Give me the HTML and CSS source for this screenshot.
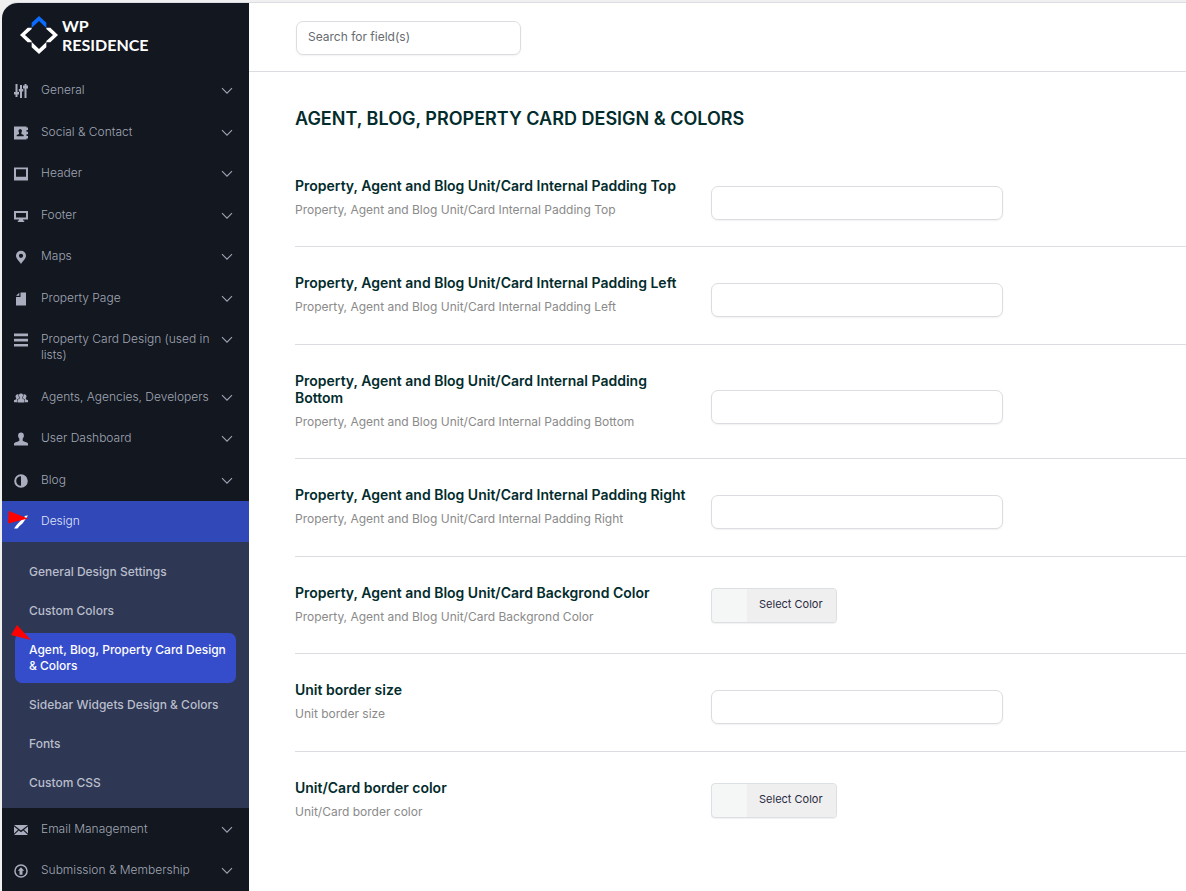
FILE: index.html
```
<!DOCTYPE html>
<html lang="en">
<head>
    <meta charset="UTF-8" />
    <meta name="viewport" content="width=device-width, initial-scale=1" />
    <title>WP Residence - Theme Options</title>
    <link rel="stylesheet" href="styles.css">
</head>
<body>
    <!-- shared chevron -->
    <svg class="sprite" aria-hidden="true">
        <symbol id="chevron" viewBox="0 0 12 8"><path d="M1 1.2l5 5 5-5" fill="none" stroke="currentColor" stroke-width="1.1" /></symbol>
    </svg>

    <div class="panel">
        <aside class="sidebar">
            <a href="#" class="logo">
                <svg class="logo-mark" viewBox="0 0 114 114" aria-hidden="true">
                    <path fill="#0a6cff" d="M57 0l22 20v16L57 15 35 36V20z" />
                    <path fill="#fff" d="M57 114l22-20V78L57 99 35 78v16zM0 57l23-22h12v4L15 57l20 18v4H23zM114 57L91 35H79v4l20 18-20 18v4h12z" />
                </svg>
                <span>WP<br />RESIDENCE</span>
            </a>

            <ul class="menu">
                <li>
                    <a href="#" class="menu-link">
                        <svg class="icon" viewBox="0 0 14 14"><path d="M1.500 0h2v8H5v2.500H3.500V13h-2v-2.500H0V8h1.500zM6 1h2v4h1.300v2.500H8V14H6V7.500H4.800V5H6zM10.500 0h2v1.500H14v3h-1.500V14h-2V4.500H9v-3h1.500z" /></svg>
                        <span>General</span>
                        <svg class="chevron"><use href="#chevron" /></svg>
                    </a>
                </li>
                <li>
                    <a href="#" class="menu-link">
                        <svg class="icon" viewBox="0 0 14 14"><path fill-rule="evenodd" d="M0 .5h12.500V13.500H0zM6.200 3a2 2 0 0 0-1.200 3.400v1.500L2.700 9v1.300h7V9L7.400 7.900V6.400A2 2 0 0 0 6.200 3z" /><path d="M12 1.500h2v2.500h-2zM12 5.800h2v2.500h-2zM12 10h2v2.500h-2z" /></svg>
                        <span>Social &amp; Contact</span>
                        <svg class="chevron"><use href="#chevron" /></svg>
                    </a>
                </li>
                <li>
                    <a href="#" class="menu-link">
                        <svg class="icon" viewBox="0 0 14 14"><path fill-rule="evenodd" d="M0 .5h14v13H0zM2 2.300v7.500h10V2.300z" /></svg>
                        <span>Header</span>
                        <svg class="chevron"><use href="#chevron" /></svg>
                    </a>
                </li>
                <li>
                    <a href="#" class="menu-link">
                        <svg class="icon" viewBox="0 0 14 14"><path fill-rule="evenodd" d="M0 2h14v8.500H9v1h1.200V13H3.800v-1.500H5v-1H0zM2 4v4.600h10V4z" /></svg>
                        <span>Footer</span>
                        <svg class="chevron"><use href="#chevron" /></svg>
                    </a>
                </li>
                <li>
                    <a href="#" class="menu-link">
                        <svg class="icon" viewBox="0 0 14 14"><path fill-rule="evenodd" d="M7 .7a5 5 0 0 0-5 5C2 8.700 5 10.500 7 14c2-3.500 5-5.300 5-8.300a5 5 0 0 0-5-5zM7 3.700a2.100 2.100 0 1 1 0 4.200 2.100 2.100 0 0 1 0-4.200z" /></svg>
                        <span>Maps</span>
                        <svg class="chevron"><use href="#chevron" /></svg>
                    </a>
                </li>
                <li>
                    <a href="#" class="menu-link">
                        <svg class="icon" viewBox="0 0 14 14"><path d="M6.500.5H12v13H2V5h4.500zM5.300.8v3H2z" /></svg>
                        <span>Property Page</span>
                        <svg class="chevron"><use href="#chevron" /></svg>
                    </a>
                </li>
                <li>
                    <a href="#" class="menu-link">
                        <svg class="icon" viewBox="0 0 14 14"><path d="M0 .5h14v2.800H0zM0 5.700h14v2.800H0zM0 10.900h14v2.600H0z" /></svg>
                        <span>Property Card Design (used in lists)</span>
                        <svg class="chevron"><use href="#chevron" /></svg>
                    </a>
                </li>
                <li>
                    <a href="#" class="menu-link">
                        <svg class="icon" viewBox="0 0 14 14"><path d="M7 2.500a2 2 0 0 1 1.300 3.600v1.500l2.200 1.200v2.700h-7V8.800l2.200-1.200V6.100A2 2 0 0 1 7 2.500z" /><path d="M3.500 3.200c.5 0 .9.100 1.100.3-.3 1 0 2 .6 2.800v.9L3 8.500v2.800H0V9.200l2.200-1V7a2.200 2.200 0 0 1 1.300-3.800zM10.500 3.200c-.5 0-.9.100-1.100.3.300 1 0 2-.6 2.800v.9L11 8.500v2.800h3V9.200l-2.200-1V7a2.200 2.200 0 0 0-1.300-3.800z" /></svg>
                        <span>Agents, Agencies, Developers</span>
                        <svg class="chevron"><use href="#chevron" /></svg>
                    </a>
                </li>
                <li>
                    <a href="#" class="menu-link">
                        <svg class="icon" viewBox="0 0 14 14"><path d="M7 .5c1.800 0 2.900 1.200 2.900 3 0 1.400-.5 2.300-1.200 3v2.300c1.500 1 4.300 1.300 5.300 2.800v2H0v-2c1-1.500 3.800-1.800 5.300-2.800V6.500c-.7-.7-1.200-1.600-1.200-3 0-1.800 1.100-3 2.900-3z" /></svg>
                        <span>User Dashboard</span>
                        <svg class="chevron"><use href="#chevron" /></svg>
                    </a>
                </li>
                <li>
                    <a href="#" class="menu-link">
                        <svg class="icon" viewBox="0 0 14 14"><path fill-rule="evenodd" d="M7 .2a6.800 6.800 0 1 1 0 13.600A6.800 6.800 0 0 1 7 .2zM7 2.200a4.800 4.800 0 0 0 0 9.600z" /></svg>
                        <span>Blog</span>
                        <svg class="chevron"><use href="#chevron" /></svg>
                    </a>
                </li>
                <li class="active">
                    <a href="#" class="menu-link">
                        <svg class="icon" viewBox="0 0 14 14"><path d="M14 .5L8.500 8.500 5.500 11 3.500 13.500H0L3 9.500 11.300.8z" /></svg>
                        <span>Design</span>
                    </a>
                    <svg class="pointer pointer-design" viewBox="0 0 20 13" aria-hidden="true"><path d="M.7 0L20 7.500 0 12.500z" /></svg>
                    <ul class="submenu">
                        <li><a href="#">General Design Settings</a></li>
                        <li><a href="#">Custom Colors</a></li>
                        <li class="current">
                            <a href="#">Agent, Blog, Property Card Design &amp; Colors</a>
                            <svg class="pointer pointer-card" viewBox="0 0 20 15" aria-hidden="true"><path d="M6 0L20 15 0 10z" /></svg>
                        </li>
                        <li><a href="#">Sidebar Widgets Design &amp; Colors</a></li>
                        <li><a href="#">Fonts</a></li>
                        <li><a href="#">Custom CSS</a></li>
                    </ul>
                </li>
                <li>
                    <a href="#" class="menu-link">
                        <svg class="icon" viewBox="0 0 14 14"><path d="M0 2h14L7 7.600zM0 3.500l4 3.300-4 3.700zM14 3.500l-4 3.300 4 3.700zM4.800 7.500L7 9.200l2.200-1.700 4.800 4.500H0z" /></svg>
                        <span>Email Management</span>
                        <svg class="chevron"><use href="#chevron" /></svg>
                    </a>
                </li>
                <li>
                    <a href="#" class="menu-link">
                        <svg class="icon" viewBox="0 0 14 14"><path fill-rule="evenodd" d="M7 .2a6.800 6.800 0 1 1 0 13.600A6.800 6.800 0 0 1 7 .2zM7 1.700a5.300 5.300 0 1 0 0 10.600A5.300 5.300 0 0 0 7 1.700z" /><path d="M7 3.200l3.200 3.500H8.500v4h-3v-4H3.800z" /></svg>
                        <span>Submission &amp; Membership</span>
                        <svg class="chevron"><use href="#chevron" /></svg>
                    </a>
                </li>
            </ul>
        </aside>

        <main class="content">
            <header class="topbar">
                <input type="text" class="field search" placeholder="Search for field(s)" aria-label="Search for field(s)" />
            </header>

            <form class="options">
                <h1>AGENT, BLOG, PROPERTY CARD DESIGN &amp; COLORS</h1>

                <div class="option">
                    <div class="option-text">
                        <label for="padding-top">Property, Agent and Blog Unit/Card Internal Padding Top</label>
                        <p>Property, Agent and Blog Unit/Card Internal Padding Top</p>
                    </div>
                    <input type="text" class="field" id="padding-top" />
                </div>
                <div class="option">
                    <div class="option-text">
                        <label for="padding-left">Property, Agent and Blog Unit/Card Internal Padding Left</label>
                        <p>Property, Agent and Blog Unit/Card Internal Padding Left</p>
                    </div>
                    <input type="text" class="field" id="padding-left" />
                </div>
                <div class="option">
                    <div class="option-text">
                        <label for="padding-bottom">Property, Agent and Blog Unit/Card Internal Padding Bottom</label>
                        <p>Property, Agent and Blog Unit/Card Internal Padding Bottom</p>
                    </div>
                    <input type="text" class="field" id="padding-bottom" />
                </div>
                <div class="option">
                    <div class="option-text">
                        <label for="padding-right">Property, Agent and Blog Unit/Card Internal Padding Right</label>
                        <p>Property, Agent and Blog Unit/Card Internal Padding Right</p>
                    </div>
                    <input type="text" class="field" id="padding-right" />
                </div>
                <div class="option">
                    <div class="option-text">
                        <label for="background-color">Property, Agent and Blog Unit/Card Backgrond Color</label>
                        <p>Property, Agent and Blog Unit/Card Backgrond Color</p>
                    </div>
                    <button type="button" class="color-picker" id="background-color"><span>Select Color</span></button>
                </div>
                <div class="option">
                    <div class="option-text">
                        <label for="border-size">Unit border size</label>
                        <p>Unit border size</p>
                    </div>
                    <input type="text" class="field" id="border-size" />
                </div>
                <div class="option">
                    <div class="option-text">
                        <label for="border-color">Unit/Card border color</label>
                        <p>Unit/Card border color</p>
                    </div>
                    <button type="button" class="color-picker" id="border-color"><span>Select Color</span></button>
                </div>
            </form>
        </main>
    </div>
</body>
</html>
```
FILE: styles.css
```
* {
    box-sizing: border-box;
}
body {
    margin: 0;
    padding: 2px 0 0 2px;
    background-color: #f0f0f1;
    font-family: Inter, "Liberation Sans", sans-serif;
    height: 100vh;
    overflow: hidden;
}
ul {
    list-style: none;
    margin: 0;
    padding: 0;
}
a {
    color: inherit;
    text-decoration: none;
}
.sprite {
    display: none;
}
.panel {
    display: flex;
    min-height: 100%;
    background-color: #fff;
    border-top: 1px solid #dcdce4;
    border-radius: 16px 0 0 0;
    overflow: hidden;
}

/* Sidebar */
.sidebar {
    flex: 0 0 247px;
    background-color: #121720;
    color: #a1a6b4;
}
.logo {
    display: flex;
    align-items: center;
    gap: 4px;
    height: 67px;
    padding: 0 0 4px 18px;
    color: #fff;
    font: 700 16px/19px Lato, sans-serif;
}
.logo-mark {
    width: 38px;
    height: 38px;
}
.menu-link {
    display: flex;
    gap: 13px;
    padding: 12px 16px 13px 12px;
    font-size: 12px;
    font-weight: 300;
    line-height: 16px;
}
.menu > li:nth-child(even) .menu-link {
    padding-top: 13px;
}
.menu-link span {
    flex: 1;
}
.icon {
    flex: none;
    width: 14px;
    height: 14px;
    margin-top: 2px;
    fill: #a9adbd;
}
.chevron {
    flex: none;
    width: 12px;
    height: 8px;
    margin: 5px 0 0 -13px;
}
.menu .active {
    position: relative;
}
.active .menu-link {
    background-color: #3148b9;
    color: #dfe3f5;
}
.active .icon {
    fill: #fff;
}
.submenu {
    display: flex;
    flex-direction: column;
    gap: 5px;
    padding: 13px 13px 8px;
    background-color: #2e3754;
    color: #b9becb;
    font-size: 12px;
    font-weight: 500;
    line-height: 16px;
}
.submenu li {
    position: relative;
}
.submenu a {
    display: block;
    padding: 9px 4px 9px 14px;
    border-radius: 7px;
}
.submenu .current a {
    background-color: #354dcb;
    color: #fff;
}
.pointer {
    position: absolute;
    width: 20px;
    fill: #f00;
}
.pointer-design {
    top: 10px;
    left: 6px;
    height: 13px;
}
.pointer-card {
    top: -8px;
    left: -4px;
    height: 15px;
}

/* Content */
.content {
    flex: 1;
    min-width: 0;
}
.topbar {
    padding: 18px 47px 16px;
    border-bottom: 1px solid #dcdde1;
}
.field {
    width: 100%;
    height: 34px;
    padding: 0 11px 3px;
    border: 1px solid #dcdde3;
    border-radius: 7px;
    background-color: #fff;
    box-shadow: 0 1px 2px rgba(0, 0, 0, 0.06);
    color: #2c3338;
    font: 12px Inter, sans-serif;
}
.search {
    display: block;
    max-width: 225px;
}
.search::placeholder {
    color: #666b70;
}
.options {
    padding-left: 46px;
}
h1 {
    margin: 0;
    padding: 35px 0 19px;
    color: #022c2c;
    font-size: 18px;
    font-weight: 600;
    line-height: 24px;
}
.option {
    display: grid;
    grid-template-columns: minmax(0, 396px) minmax(0, 292px);
    column-gap: 20px;
    align-items: center;
    padding: 27px 0;
    border-bottom: 1px solid #dcdde3;
}
.option:nth-child(even) {
    padding-bottom: 26px;
}
.option:last-child {
    border-bottom: 0;
}
.option-text label {
    display: block;
    color: #022c2c;
    font-size: 14px;
    font-weight: 600;
    line-height: 17px;
}
.option-text p {
    margin: 6px 0 0;
    color: #8a8a8a;
    font-size: 12px;
    line-height: 20px;
}
.option .field {
    margin-top: 9px;
}
.color-picker {
    justify-self: start;
    display: flex;
    height: 35px;
    padding: 0 0 0 35px;
    border: 1px solid #dcdfe4;
    border-radius: 4px;
    background-color: #f5f7f7;
    box-shadow: 0 1px 1px rgba(0, 0, 0, 0.06);
    font: 11px/31px Inter, sans-serif;
    color: #2a2a42;
    overflow: hidden;
}
.color-picker span {
    height: 34px;
    padding: 0 13px 0 12px;
    background-color: #efefef;
}
```
